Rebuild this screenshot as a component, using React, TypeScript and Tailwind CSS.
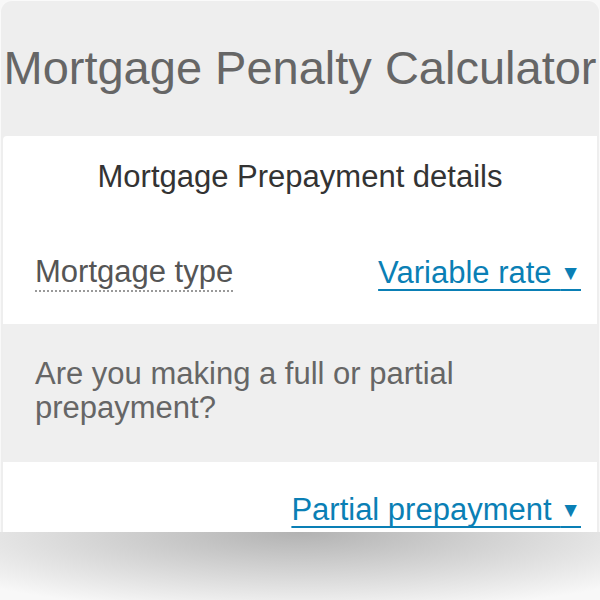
export default function App() {
  return (
    <div className="w-[600px] h-[600px] bg-[#f8f8f8] flex flex-col font-['Liberation_Sans',Arial,sans-serif]">
      <div className="bg-[#eeeeee] rounded-t-[12px] px-[2px] border-t border-x border-white/70">
        <h1 className="h-[135px] flex items-center justify-center text-[47px] text-[#666666] whitespace-nowrap">
          Mortgage Penalty Calculator
        </h1>
        <div className="bg-white rounded-tl-[4px]">
          <div className="h-[86px] flex items-center justify-center pb-[3px] text-[31px] text-[#333333]">
            Mortgage Prepayment details
          </div>
          <div className="h-[102px] flex items-center justify-between pl-[32px] pr-[16px] pb-[1px]">
            <span className="text-[31px] text-[#555555] border-b-2 border-dotted border-[#999999] leading-[36px]">
              Mortgage type
            </span>
            <a className="text-[31px] text-[#0a7fb5] underline underline-offset-[6px] decoration-2 leading-[36px] cursor-pointer">
              Variable rate <span className="text-[21px] align-[3px]">▼</span>
            </a>
          </div>
          <div className="h-[138px] bg-[#efefef] px-[32px] pt-[33px] text-[31px] leading-[34px] text-[#666666]">
            Are you making a full or partial prepayment?
          </div>
          <div className="h-[70px] flex items-end justify-end px-[16px] pb-[5px]">
            <a className="text-[31px] text-[#0a7fb5] underline underline-offset-[6px] decoration-2 leading-[34px] cursor-pointer">
              Partial prepayment <span className="text-[21px] align-[3px]">▼</span>
            </a>
          </div>
        </div>
      </div>
      <div className="flex-1 bg-[radial-gradient(ellipse_70%_120%_at_50%_0%,#b2b2b2,#f8f8f8)]" />
    </div>
  );
}
